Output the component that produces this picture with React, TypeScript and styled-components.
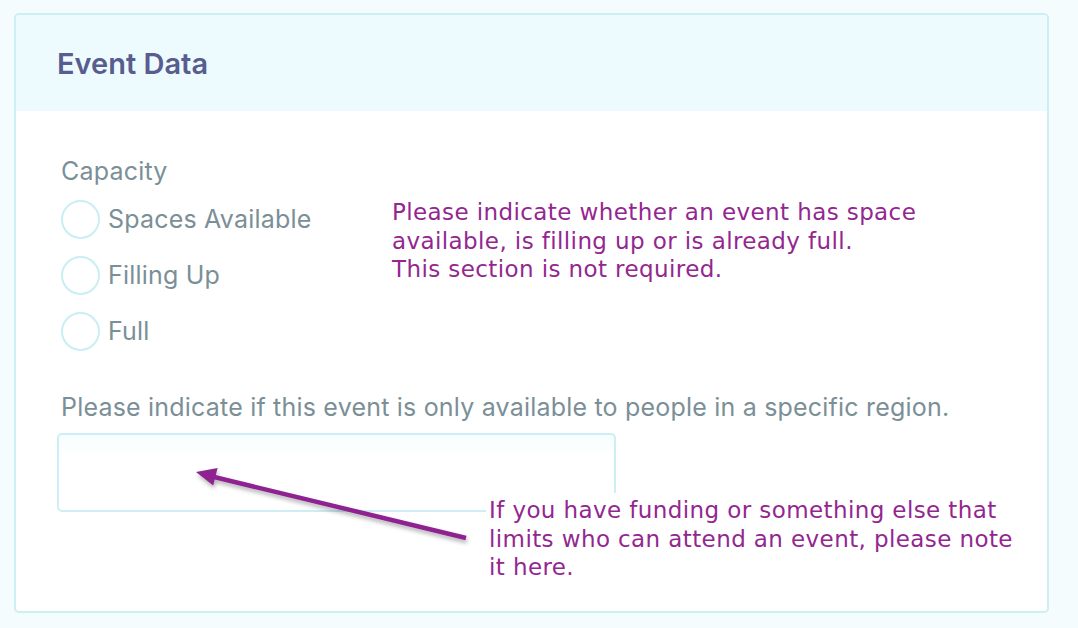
import React from "react";
import styled, { createGlobalStyle } from "styled-components";

const Global = createGlobalStyle`
  html, body { margin: 0; padding: 0; }
  body {
    background: #f4fcfe;
    font-family: Inter, "Noto Sans", sans-serif;
    -webkit-font-smoothing: antialiased;
  }
`;

const Page = styled.div`
  padding: 13px 0 0 14px;
`;

const Card = styled.section`
  position: relative;
  width: 1031px;
  height: 596px;
  border: 2px solid #cdeef5;
  border-radius: 5px;
  background: #ffffff;
  overflow: hidden;
`;

const Header = styled.header`
  height: 96px;
  background: #edfbfe;
  display: flex;
  align-items: center;
  padding-left: 41px;
`;

const Title = styled.h2`
  margin: 0;
  font-size: 29px;
  font-weight: 600;
  color: #585c8e;
`;

const Body = styled.div`
  padding: 46px 0 0 41px;
`;

const CapacityRow = styled.div`
  display: flex;
  align-items: flex-start;
`;

const FieldGroup = styled.fieldset`
  border: 0;
  margin: 0;
  padding: 0 0 0 4px;
  width: 331px;
`;

const Legend = styled.div`
  font-size: 25px;
  line-height: 28px;
  letter-spacing: 0.2px;
  color: #7b8f97;
`;

const RadioList = styled.div`
  display: flex;
  flex-direction: column;
  gap: 16px;
  margin-top: 14px;
`;

const RadioRow = styled.label`
  display: flex;
  align-items: center;
  gap: 8px;
  height: 40px;
`;

const Circle = styled.span`
  box-sizing: border-box;
  width: 39px;
  height: 39px;
  border-radius: 50%;
  border: 2px solid #c9eef5;
  background: #fff;
`;

const RadioText = styled.span`
  font-size: 25px;
  letter-spacing: 0.2px;
  color: #7b8f97;
`;

const Note = styled.p<{ $width: number }>`
  margin: 0;
  width: ${(p) => p.$width}px;
  font-family: "DejaVu Sans", sans-serif;
  font-size: 23px;
  line-height: 28.5px;
  letter-spacing: 0.4px;
  color: #93278f;
  background: #fff;
`;

const TopNote = styled(Note)`
  margin-top: 41px;
`;

const RegionLabel = styled.div`
  margin-top: 42px;
  padding-left: 4px;
  font-size: 25px;
  line-height: 28px;
  letter-spacing: 0.2px;
  color: #7b8f97;
`;

const InputWrap = styled.div`
  position: relative;
  margin-top: 12px;
`;

const TextBox = styled.div`
  box-sizing: border-box;
  width: 559px;
  height: 79px;
  border: 2px solid #cdeef5;
  border-radius: 5px;
  background: linear-gradient(#f6fdfe, #ffffff 30%);
`;

const BottomNote = styled(Note)`
  position: absolute;
  left: 429px;
  top: 60px;
  padding: 3px 0 0 3px;
`;

const Arrow = styled.svg`
  position: absolute;
  left: 123px;
  top: 26px;
  overflow: visible;
  pointer-events: none;
`;

export default function App() {
  return (
    <>
      <Global />
      <Page>
        <Card>
          <Header>
            <Title>Event Data</Title>
          </Header>
          <Body>
            <CapacityRow>
              <FieldGroup>
                <Legend>Capacity</Legend>
                <RadioList>
                  {["Spaces Available", "Filling Up", "Full"].map((t) => (
                    <RadioRow key={t}>
                      <Circle />
                      <RadioText>{t}</RadioText>
                    </RadioRow>
                  ))}
                </RadioList>
              </FieldGroup>
              <TopNote $width={600}>
                Please indicate whether an event has space
                <br />
                available, is filling up or is already full.
                <br />
                This section is not required.
              </TopNote>
            </CapacityRow>
            <RegionLabel>
              Please indicate if this event is only available to people in a specific region.
            </RegionLabel>
            <InputWrap>
              <TextBox />
              <BottomNote $width={560}>
                If you have funding or something else that
                <br />
                limits who can attend an event, please note
                <br />
                it here.
              </BottomNote>
              <Arrow width="300" height="90" viewBox="0 0 300 90">
                <defs>
                  <filter id="sh" x="-10%" y="-30%" width="130%" height="180%">
                    <feDropShadow dx="1" dy="3" stdDeviation="2" floodColor="#000" floodOpacity="0.3" />
                  </filter>
                </defs>
                <g filter="url(#sh)">
                  <line x1="286" y1="79" x2="30" y2="17" stroke="#8e2490" strokeWidth="4.5" />
                  <polygon points="16,13 37.6,9 33.2,26.5" fill="#8e2490" />
                </g>
              </Arrow>
            </InputWrap>
          </Body>
        </Card>
      </Page>
    </>
  );
}
